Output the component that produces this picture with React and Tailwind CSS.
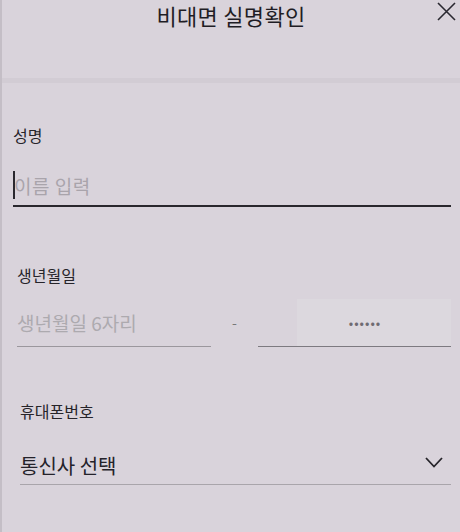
export default function App() {
  const font = { fontFamily: '"Noto Sans CJK KR", "Noto Sans", sans-serif' };
  return (
    <div className="w-[460px] h-[532px] bg-[#d9d3db] overflow-hidden border-l-2 border-l-[#c4bec6]" style={font}>
      <div className="relative h-[36px] flex items-center justify-center">
        <span className="text-[22px] leading-none text-[#1f1d25] tracking-[0.3px] -mt-[6px]">비대면 실명확인</span>
        <svg className="absolute right-[4px] top-[2px]" width="19" height="19" viewBox="0 0 19 19" fill="none" stroke="#2a2830" strokeWidth="1.6">
          <path d="M1 1 L18 18 M18 1 L1 18" />
        </svg>
      </div>
      <div className="h-[42px]" />
      <div className="h-[5px] bg-[#d2ccd4]" />
      <div className="pl-[11px] pr-[9px]">
        <div className="mt-[44px] text-[16px] leading-none text-[#26242a]">성명</div>
        <div className="mt-[29px] flex items-center h-[26px] border-b-2 border-b-[#29272d] pb-[7px] box-content">
          <span className="w-[2px] h-[28px] bg-[#2a282e]" />
          <span className="text-[19px] text-[#a9a4ab] leading-none -ml-[1px] tracking-[0.5px]">이름 입력</span>
        </div>
        <div className="mt-[60px] text-[16px] leading-none text-[#26242a] pl-[4px]">생년월일</div>
        <div className="mt-[16px] flex items-end">
          <div className="ml-[4px] w-[194px] h-[48px] flex items-center border-b border-b-[#9b979d]">
            <span className="text-[19px] text-[#adaaaf] leading-none">생년월일 6자리</span>
          </div>
          <div className="w-[47px] h-[48px] flex items-center justify-center text-[14px] text-[#777] pb-[2px]">-</div>
          <div className="flex-1 h-[48px] flex border-b border-b-[#7d7a80]">
            <div className="w-[39px]" />
            <div className="flex-1 bg-[#dcd8de] flex items-center justify-center">
              <span className="text-[#6f6b72] text-[13px] tracking-[1px] leading-none -ml-[18px]">••••••</span>
            </div>
          </div>
        </div>
        <div className="mt-[56px] text-[16px] leading-none text-[#26242a] pl-[7px]">휴대폰번호</div>
        <div className="mt-[22px] ml-[7px] h-[44px] flex items-center justify-between border-b border-b-[#a9a5ab] pb-[12px] box-border">
          <span className="text-[20px] text-[#24222a] leading-none mt-[18px]">통신사 선택</span>
          <svg className="mr-[8px] mt-[12px]" width="18" height="11" viewBox="0 0 18 11" fill="none" stroke="#26242a" strokeWidth="1.8">
            <path d="M1 1 L9 9.5 L17 1" />
          </svg>
        </div>
      </div>
    </div>
  );
}
